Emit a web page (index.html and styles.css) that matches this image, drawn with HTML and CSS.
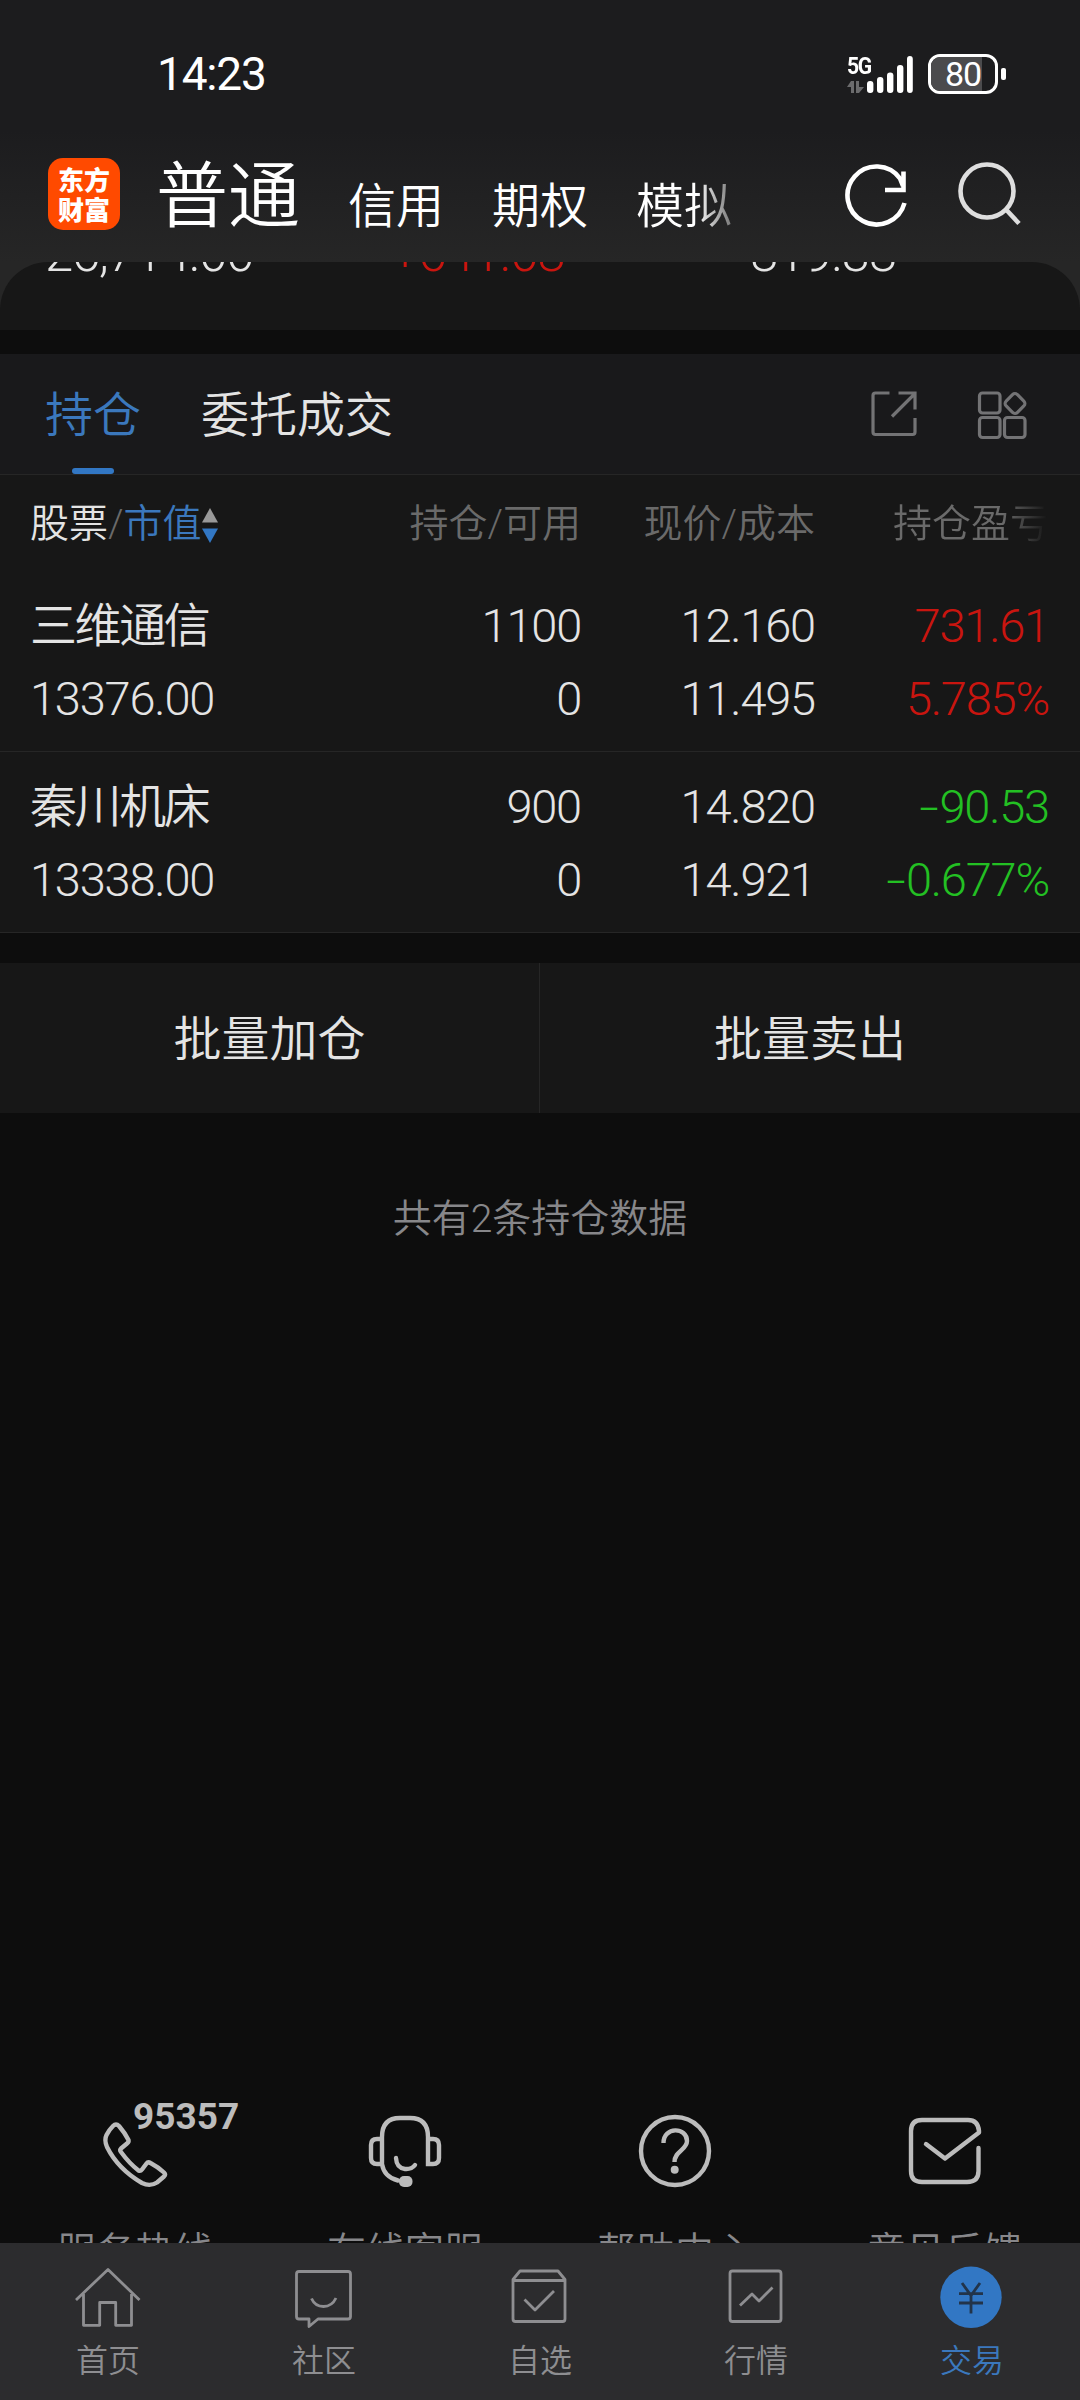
FILE: index.html
```html
<!DOCTYPE html>
<html lang="zh-CN">
<head>
<meta charset="utf-8">
<title>交易 - 持仓</title>
<link rel="stylesheet" href="styles.css">
</head>
<body>
<div class="app">
  <header class="top">
    <div class="status">
      <span class="time">14:23</span>
      <div class="status-right">
        <div class="net">
          <span class="net-type">5G</span>
          <svg class="net-arrows" width="17" height="13" viewBox="0 0 17 13" fill="#6b6b6d"><path d="M4 0h3v12H4V6H0zM9 0h3v6h5l-5 6H9z"/></svg>
        </div>
        <svg class="bars" width="47" height="38" viewBox="0 0 47 38" fill="#fff"><rect x="0" y="26" width="6.4" height="12" rx="3"/><rect x="10" y="22" width="6.4" height="16" rx="3"/><rect x="20" y="17.500" width="6.400" height="20.500" rx="3"/><rect x="30" y="10" width="6.400" height="28" rx="3"/><rect x="40" y="1" width="5.800" height="37" rx="2.900"/></svg>
        <div class="battery"><span class="battery-level"></span><span class="battery-num">80</span></div>
        <span class="battery-cap"></span>
      </div>
    </div>
    <div class="nav-top">
      <div class="logo"><span>东方</span><span>财富</span></div>
      <nav class="accounts">
        <a class="account active">普通</a><a class="account">信用</a><a class="account">期权</a><a class="account last">模拟</a>
      </nav>
      <div class="actions">
        <svg width="64" height="68" viewBox="844 161 64 68" fill="none" stroke="#fff" stroke-width="4.600"><path d="M904.500 203A29 29 0 1 1 900 178.500L903 186"/><path d="M903.500 171.500V190H885"/></svg>
        <svg width="64" height="68" viewBox="957 161 64 68" fill="none" stroke="#dedede" stroke-width="4.600"><circle cx="987" cy="191" r="26.500"/><path d="M1006 209.500L1019 223.500"/></svg>
      </div>
    </div>
  </header>

  <section class="summary-wrap">
    <div class="summary">
      <span class="sum a">26,714.00</span><span class="sum b">+641.08</span><span class="sum c">819.38</span>
    </div>
  </section>

  <section class="holdings">
    <div class="tabs">
      <a class="tab active">持仓</a><a class="tab">委托成交</a>
      <div class="tools">
        <svg width="48" height="50" viewBox="870 390 48 50" fill="none" stroke="#737375" stroke-width="3.200"><path d="M889.500 393H875.500Q873 393 873 395.500V432Q873 434.500 875.500 434.500H912.500Q915 434.500 915 432V418"/><path d="M898.500 393H915V409.500M914 394.500L892 416.500"/></svg>
        <svg width="52" height="50" viewBox="976 390 52 50" fill="none" stroke="#737375" stroke-width="3.200"><rect x="979.500" y="393" width="20.500" height="20" rx="3"/><rect x="979.500" y="417.500" width="20.500" height="20" rx="3"/><rect x="1004.500" y="417.500" width="20.500" height="20" rx="3"/><rect x="1007" y="395.500" width="16" height="16" rx="3.500" transform="rotate(45 1015 403.500)"/></svg>
      </div>
    </div>
    <div class="thead cols">
      <div class="sort"><span class="on">股票</span><span>/</span><span class="blue">市值</span><svg width="16" height="36" viewBox="0 0 16 36"><path d="M8 0l8 14.500H0z" fill="#999"/><path d="M0 20.500h16L8 35z" fill="#3277c4"/></svg></div>
      <div>持仓/可用</div><div>现价/成本</div><div class="fade">持仓盈亏</div>
    </div>
    <div class="row cols">
      <div>三维通信<br>13376.00</div><div>1100<br>0</div><div>12.160<br>11.495</div><div class="up">731.61<br>5.785%</div>
    </div>
    <div class="row cols">
      <div>秦川机床<br>13338.00</div><div>900<br>0</div><div>14.820<br>14.921</div><div class="down"><i>-</i>90.53<br><i>-</i>0.677%</div>
    </div>
  </section>

  <section class="batch"><button>批量加仓</button><button>批量卖出</button></section>
  <p class="count">共有2条持仓数据</p>

  <section class="services">
    <a class="service">
      <span class="hotline">95357</span>
      <svg width="270" height="90" viewBox="0 2105 270 90" fill="none" stroke="#bcbcbc" stroke-width="4.400" stroke-linejoin="round"><path d="M113 2126Q116 2123 119 2126Q125 2133 128.500 2140Q129 2142 127 2143.500L121 2148.500Q119.500 2150 121 2152Q129 2163 138.500 2170.500Q140.500 2171.500 142 2169.500L146.500 2163.500Q148 2161.500 150.500 2163Q158 2167 164 2172.500Q166 2174.500 164 2176.500L157 2182.500Q150 2187 142 2183Q118 2169 107 2147Q104 2140 106.500 2135Q109 2130 113 2126Z"/></svg>
      <span>服务热线</span>
    </a>
    <a class="service">
      <svg width="270" height="90" viewBox="270 2105 270 90" fill="none" stroke="#bcbcbc" stroke-width="4.400" stroke-linecap="round"><path d="M382 2164V2137Q382 2118 400 2118H410Q428 2118 428 2137V2164H433Q439 2164 439 2158V2145Q439 2139 433 2139H428M382 2139H377Q371 2139 371 2145V2158Q371 2164 377 2164H382Q384 2177 398 2180.500M396 2158Q396.500 2168 405 2169Q411.500 2169.500 415 2165"/><rect x="399" y="2176" width="13.500" height="11" rx="5" fill="#bcbcbc" stroke="none"/></svg>
      <span>在线客服</span>
    </a>
    <a class="service">
      <svg width="270" height="90" viewBox="540 2105 270 90" fill="none" stroke="#bcbcbc" stroke-width="4.400"><circle cx="675" cy="2151" r="34"/><path d="M663.500 2143C663.500 2126 687 2127 687 2141C687 2150 674.500 2151 674.500 2162"/><circle cx="674.700" cy="2169.700" r="4" fill="#bcbcbc" stroke="none"/></svg>
      <span>帮助中心</span>
    </a>
    <a class="service">
      <svg width="270" height="90" viewBox="810 2105 270 90" fill="none" stroke="#bcbcbc" stroke-width="4.400" stroke-linecap="round" stroke-linejoin="round"><path d="M926 2144L945 2158.500L979 2132.500V2131Q978 2120 968 2120H922Q911 2120 911 2131V2171Q911 2182 922 2182H967Q978.500 2182 978.500 2171V2148"/></svg>
      <span>意见反馈</span>
    </a>
  </section>

  <nav class="bottom">
    <a><svg width="70" height="66" viewBox="73 2264 70 66" fill="none" stroke="#8e8e91" stroke-width="2.800" stroke-linejoin="round"><path d="M76 2300L108 2269.500L139.500 2300M83.500 2294V2325.300H99.700V2302.500H115.700V2325.300H131.500V2294"/></svg><span>首页</span></a>
    <a><svg width="70" height="66" viewBox="289 2264 70 66" fill="none" stroke="#8e8e91" stroke-width="2.800" stroke-linejoin="round"><path d="M299 2271.500H348Q350.500 2271.500 350.500 2274V2316.500Q350.500 2319 348 2319H318L309 2326.500V2319H299Q296.500 2319 296.500 2316.500V2274Q296.500 2271.500 299 2271.500Z"/><path d="M311.500 2298.500Q315 2306.500 323.500 2306.500Q332 2306.500 336 2298"/></svg><span>社区</span></a>
    <a><svg width="70" height="66" viewBox="505 2264 70 66" fill="none" stroke="#8e8e91" stroke-width="2.800" stroke-linejoin="round"><path d="M513 2279.500L520 2271H558L565 2279.500V2319Q565 2321.500 562.500 2321.500H515.500Q513 2321.500 513 2319ZM513 2280.500H565M524.500 2299.500L535 2310L554 2291"/></svg><span>自选</span></a>
    <a><svg width="70" height="66" viewBox="721 2264 70 66" fill="none" stroke="#8e8e91" stroke-width="2.800" stroke-linejoin="round"><rect x="730" y="2271" width="51" height="50.500" rx="2.500"/><path d="M740 2305.500L752 2294L759 2301L772.500 2287.500"/></svg><span>行情</span></a>
    <a class="active"><svg width="70" height="66" viewBox="937 2264 70 66" fill="none" stroke="#22344a" stroke-width="2.800"><circle cx="971" cy="2297.300" r="30.700" fill="#3277c4" stroke="none"/><path d="M962 2283L971 2295.500L980 2283M959 2293.700H983M959 2303H983M971 2294V2313.500"/></svg><span>交易</span></a>
  </nav>
</div>
</body>
</html>
```
FILE: styles.css
```css
* { box-sizing: border-box; }
body {
  margin: 0;
  background: #0d0d0d;
  color: #e4e4e4;
  font-family: Roboto, "Noto Sans CJK SC", sans-serif;
  font-weight: 350;
}
.app { width: 1080px; height: 2400px; display: flex; flex-direction: column; overflow: hidden; }

/* status bar and account switcher */
.top { height: 262px; color: #fff; background: linear-gradient(#1c1c1e 0 130px, #262626 262px); }
.status { height: 140px; padding: 0 74px 0 157px; display: flex; justify-content: space-between; }
.time { font-size: 46px; font-weight: 400; line-height: 148px; letter-spacing: -1.2px; }
.status-right { display: flex; align-items: flex-start; padding-top: 55px; }
.net { width: 20px; display: flex; flex-direction: column; }
.net-type { font-size: 24px; line-height: 22px; font-weight: 700; letter-spacing: -1.500px; height: 26px; transform: scaleX(.88); transform-origin: 0 0; }
.bars { margin-right: 14px; }
.battery { position: relative; width: 70px; height: 40px; margin-top: -1px; border: 3px solid #fff; border-radius: 12px; overflow: hidden; text-align: center; }
.battery-level { position: absolute; left: 0; top: 0; width: 51px; height: 34px; background: #4b4b4d; }
.battery-num { position: relative; font-size: 34px; line-height: 35px; font-weight: 400; letter-spacing: -1px; }
.battery-cap { width: 5px; height: 12px; margin: 13px 0 0 3px; border-radius: 2px; background: #fff; }
.nav-top { height: 122px; display: flex; padding-left: 48px; }
.logo { width: 72px; height: 72px; margin-top: 18px; padding-top: 6px; border-radius: 15px; background: #ff4a00; display: flex; flex-direction: column; align-items: center; font-family: "Noto Sans CJK SC", sans-serif; font-size: 26px; line-height: 30px; font-weight: 900; }
.accounts { display: flex; align-items: baseline; width: 690px; padding-left: 36px; gap: 48px; line-height: 114px; }
.account { font-size: 48px; position: relative; top: 2px; }
.account.active { font-size: 72px; top: 0; }
.account.last { background: linear-gradient(90deg, #fff 62%, #777); -webkit-background-clip: text; background-clip: text; color: transparent; }
.actions { display: flex; gap: 49px; padding-top: 21px; margin-left: 34px; }

/* asset summary, scrolled under the header */
.summary-wrap { height: 68px; background: #262626; }
.summary { height: 68px; border-radius: 48px 48px 0 0; background: #171717; display: flex; padding-left: 45px; overflow: hidden; font-size: 51px; line-height: 60px; letter-spacing: -1.300px; }
.sum { margin-top: -38px; height: 68px; }
.a { width: 346px; }
.b { width: 359px; color: #c9150f; }

/* holdings */
.holdings { margin-top: 24px; background: #171717; }
.tabs { height: 121px; padding: 0 52px 0 45px; display: flex; gap: 60px; background: #19191b; border-bottom: 1px solid #262626; font-size: 48px; line-height: 124px; }
.tab { height: 120px; }
.tab.active { color: #3b78bd; display: flex; flex-direction: column; align-items: center; }
.tab.active::after { content: ""; width: 42px; height: 6px; margin-top: -10px; border-radius: 3px; background: #3277c4; flex: none; }
.tools { margin-left: auto; display: flex; gap: 58px; padding-top: 36px; }
.cols { display: grid; grid-template-columns: 320px 231px 234px 234px; padding-left: 30px; text-align: right; }
.cols > :first-child { text-align: left; }
.thead { height: 96px; font-size: 39px; line-height: 99px; color: #6a6a6a; }
.sort { display: flex; }
.sort .on { color: #e4e4e4; }
.sort .blue { color: #3b78bd; }
.sort svg { margin: 33px 0 0 0; }
.fade { background: linear-gradient(90deg, #6a6a6a 80%, #171717 99%); -webkit-background-clip: text; background-clip: text; color: transparent; }
.row { height: 181px; padding-top: 18px; font-size: 47px; line-height: 73px; letter-spacing: -1.200px; border-bottom: 1px solid #262626; }
.row > :first-child::first-line { letter-spacing: -2.400px; }
.up { color: #c9150f; }
.down { color: #23c023; }
.down i { display: inline-block; font-style: normal; transform: scaleX(1.500); transform-origin: 50% 50%; margin-right: 5px; }

.batch { display: grid; grid-template-columns: 540px 540px; height: 150px; margin-top: 30px; background: #171717; }
.batch button { border: 0; background: none; color: inherit; font: inherit; font-size: 48px; padding: 0; line-height: 150px; padding-top: 2px; height: 150px; }
.batch button:first-child { border-right: 1px solid #262626; }
.count { margin: 75px 0 0; text-align: center; font-size: 39px; line-height: 62px; color: #87878a; }

/* service shortcuts */
.services { margin-top: auto; height: 148px; padding-top: 10px; display: grid; grid-template-columns: repeat(4, 270px); overflow: hidden; }
.service { position: relative; display: flex; flex-direction: column; align-items: center; font-size: 39px; line-height: 48px; color: #87878a; }
.service svg { flex: none; margin-bottom: 33px; }
.service .hotline { position: absolute; left: 133px; top: -8px; font-size: 37px; line-height: 40px; font-weight: 700; color: #bcbcbc; }

.bottom { flex: none; height: 157px; background: #2c2c2e; display: grid; grid-template-columns: repeat(5, 216px); color: #8e8e91; }
.bottom a { display: flex; flex-direction: column; align-items: center; padding-top: 21px; font-size: 32px; line-height: 62px; }
.bottom .active { color: #3b78bd; }
```
